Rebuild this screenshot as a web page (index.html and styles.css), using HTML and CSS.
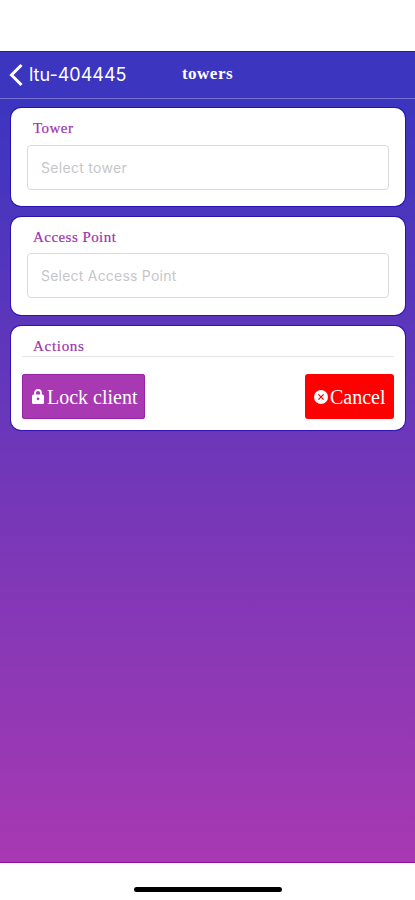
FILE: index.html
```html
<!DOCTYPE html>
<html lang="en">
<head>
<meta charset="utf-8">
<title>towers</title>
<link rel="stylesheet" href="styles.css">
</head>
<body>
<div class="app">
  <header class="header">
    <a class="back">
      <svg class="chevron" viewBox="0 0 14 24"><path d="M12.5 2 2.5 12l10 10"/></svg>
      <span class="back-label">ltu-404445</span>
    </a>
    <h1 class="title">towers</h1>
  </header>
  <main class="cards">
    <section class="card">
      <h2 class="label label-tower">Tower</h2>
      <div class="field"><span class="hint-tower">Select tower</span></div>
    </section>
    <section class="card">
      <h2 class="label label-point">Access Point</h2>
      <div class="field"><span class="hint-point">Select Access Point</span></div>
    </section>
    <section class="card card-actions">
      <h2 class="label label-actions">Actions</h2>
      <div class="divider"></div>
      <div class="buttons">
        <button class="button button-lock">
          <svg class="icon-lock" viewBox="0 0 12 15"><path class="shackle" d="M3 7V4a3 3 0 0 1 6 0v3"/><rect x="0" y="5.4" width="12" height="9.6" rx="1.5"/><circle class="hole" cx="6" cy="9.8" r="1.35"/></svg>
          <span class="text-lock">Lock client</span>
        </button>
        <button class="button button-cancel">
          <svg class="icon-cancel" viewBox="0 0 14 14"><circle cx="7" cy="7" r="7"/><path d="m4.4 4.4 5.2 5.2m0-5.2-5.2 5.2"/></svg>
          <span class="text-cancel">Cancel</span>
        </button>
      </div>
    </section>
  </main>
</div>
<div class="home"><div class="home-bar"></div></div>
</body>
</html>
```
FILE: styles.css
```css
* { box-sizing: border-box; }
body {
  margin: 0;
  height: 900px;
  padding-top: 51px;
  background: #fff;
  font-family: Inter, sans-serif;
  overflow: hidden;
}
.app {
  height: 812px;
  background: linear-gradient(#3c35bf 0, #3c35bf 46px, #a839b2 100%);
  border-top: 1px solid #2417ad;
  border-bottom: 1px solid #8d0c9d;
}
.header {
  height: 47px;
  display: grid;
  grid-template-columns: 1fr auto 1fr;
  align-items: center;
  padding: 0 9px;
  border-bottom: 1px solid #7772d5;
  color: #fff;
}
.back { display: flex; align-items: center; gap: 6px; }
.chevron {
  width: 14px;
  height: 24px;
  fill: none;
  stroke: #fff;
  stroke-width: 3;
}
.back-label { font-size: 18px; line-height: 22px; white-space: nowrap; }
.title {
  margin: 0;
  padding-bottom: 2px;
  font: bold 17px/22px "Liberation Serif", serif;
  letter-spacing: 0.5px;
}
.cards {
  display: flex;
  flex-direction: column;
  gap: 11px;
  padding: 9px 10px 0 11px;
}
.card {
  height: 98px;
  padding: 11px 16px 0;
  background: #fff;
  border-radius: 10px;
  box-shadow: 0 0 0 1px rgba(20, 0, 175, 0.65);
}
.card-actions { height: 104px; padding: 11px 11px 0; }
.label {
  margin: 0 0 8px 6px;
  font: 15px/18px "Liberation Serif", serif;
  letter-spacing: 0.45px;
  color: #a033ac;
  -webkit-text-stroke: 0.2px #a033ac;
}
.label-point { margin-bottom: 7px; }
.label-actions { margin: 0 0 1px 11px; letter-spacing: 0.7px; }
.field {
  width: 362px;
  height: 45px;
  display: flex;
  align-items: center;
  padding: 0 0 1px 13px;
  border: 1px solid #d9d9d9;
  border-radius: 4px;
  color: #c6c6c8;
  font-size: 14px;
}
.hint-tower { letter-spacing: 0.3px; }
.hint-point { letter-spacing: 0.22px; }
.divider { height: 1px; background: #e6e6e6; }
.buttons { display: flex; justify-content: space-between; margin-top: 17px; }
.button {
  height: 45px;
  display: flex;
  align-items: center;
  padding: 0 0 0 10px;
  border: 0;
  border-radius: 3px;
  color: #fff;
  font: 20px/24px "Liberation Serif", serif;
  white-space: nowrap;
}
.button-lock { width: 123px; background: #a839b2; box-shadow: inset 0 0 0 1px #9a24a7; gap: 3px; }
.button-cancel { width: 89px; background: #f00; padding-left: 9px; gap: 2px; }
.icon-lock { width: 12px; height: 15px; fill: #fff; }
.shackle { fill: none; stroke: #fff; stroke-width: 1.8; }
.hole { fill: #a839b2; }
.icon-cancel { width: 14px; height: 14px; fill: #fff; }
.icon-cancel path { stroke: #f00; stroke-width: 1.3; }
.home { height: 37px; display: flex; justify-content: center; padding-top: 24px; }
.home-bar { width: 148px; height: 5px; border-radius: 3px; background: #000; }
```
